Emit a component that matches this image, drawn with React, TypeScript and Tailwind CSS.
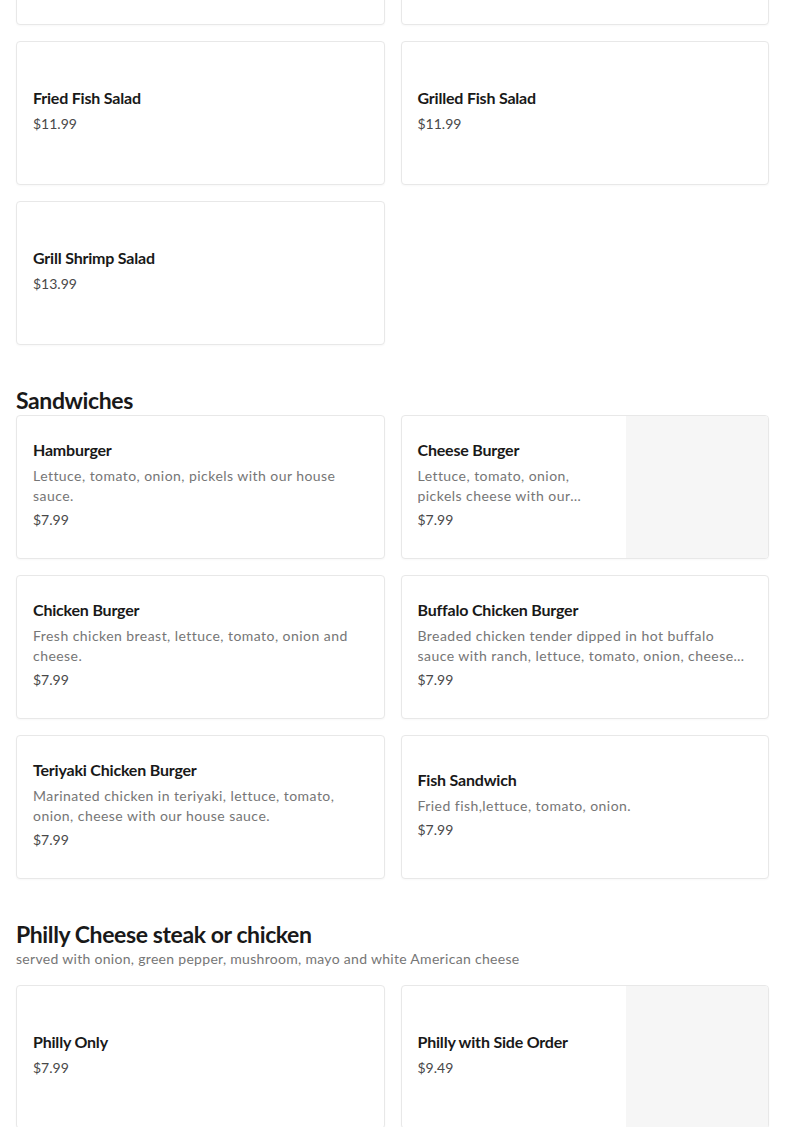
import React from 'react';

type Item = { name: string; price: string; desc?: string; image?: boolean };

const salads: Item[] = [
    { name: 'Fried Fish Salad', price: '$11.99' },
    { name: 'Grilled Fish Salad', price: '$11.99' },
    { name: 'Grill Shrimp Salad', price: '$13.99' },
];

const sandwiches: Item[] = [
    { name: 'Hamburger', price: '$7.99', desc: 'Lettuce, tomato, onion, pickels with our house sauce.' },
    { name: 'Cheese Burger', price: '$7.99', desc: 'Lettuce, tomato, onion, pickels cheese with our house sauce.', image: true },
    { name: 'Chicken Burger', price: '$7.99', desc: 'Fresh chicken breast, lettuce, tomato, onion and cheese.' },
    { name: 'Buffalo Chicken Burger', price: '$7.99', desc: 'Breaded chicken tender dipped in hot buffalo sauce with ranch, lettuce, tomato, onion, cheese with our house sauce.' },
    { name: 'Teriyaki Chicken Burger', price: '$7.99', desc: 'Marinated chicken in teriyaki, lettuce, tomato, onion, cheese with our house sauce.' },
    { name: 'Fish Sandwich', price: '$7.99', desc: 'Fried fish,lettuce, tomato, onion.' },
];

const philly: Item[] = [
    { name: 'Philly Only', price: '$7.99' },
    { name: 'Philly with Side Order', price: '$9.49', image: true },
];

const MenuCard = ({ item }: { item: Item }) => (
    <div className="flex h-[144px] overflow-hidden rounded-[4px] border border-[#e8e8e8] bg-white shadow-[0_1px_2px_rgba(0,0,0,0.03)]">
        <div className="flex min-w-0 flex-1 flex-col justify-center px-4 pb-[6px]">
            <h3 className="text-[16px] font-bold leading-6 tracking-[-0.2px] text-[#191919]">{item.name}</h3>
            {item.desc && (
                <p className="mt-1 line-clamp-2 text-[14px] leading-5 tracking-[0.45px] text-[#767676]">{item.desc}</p>
            )}
            <span className="mt-1 text-[14px] leading-5 text-[#494949]">{item.price}</span>
        </div>
        {item.image && <div className="w-[142px] shrink-0 bg-[#f6f6f6]" />}
    </div>
);

const Grid = ({ items }: { items: Item[] }) => (
    <div className="grid grid-cols-2 gap-4">
        {items.map((item) => (
            <MenuCard key={item.name} item={item} />
        ))}
    </div>
);

export default function App() {
    return (
        <div className="min-h-screen overflow-hidden bg-white px-4 font-['Lato',sans-serif]">
            {/* previous row, cut off by the top of the viewport */}
            <div className="mt-[-119px] grid grid-cols-2 gap-4">
                <div className="h-[144px] rounded-[4px] border border-[#e8e8e8] bg-white shadow-[0_1px_2px_rgba(0,0,0,0.03)]" />
                <div className="h-[144px] rounded-[4px] border border-[#e8e8e8] bg-white shadow-[0_1px_2px_rgba(0,0,0,0.03)]" />
            </div>
            <div className="mt-4">
                <Grid items={salads} />
            </div>

            <h2 className="mt-[41px] text-[23px] font-bold leading-7 tracking-[-0.4px] text-[#191919]">Sandwiches</h2>
            <div className="mt-[1px]">
                <Grid items={sandwiches} />
            </div>

            <h2 className="mt-[41px] text-[23px] font-bold leading-7 tracking-[-0.4px] text-[#191919]">Philly Cheese steak or chicken</h2>
            <p className="mt-px text-[14px] leading-5 tracking-[0.3px] text-[#767676]">served with onion, green pepper, mushroom, mayo and white American cheese</p>
            <div className="mt-4">
                <Grid items={philly} />
            </div>
        </div>
    );
}
